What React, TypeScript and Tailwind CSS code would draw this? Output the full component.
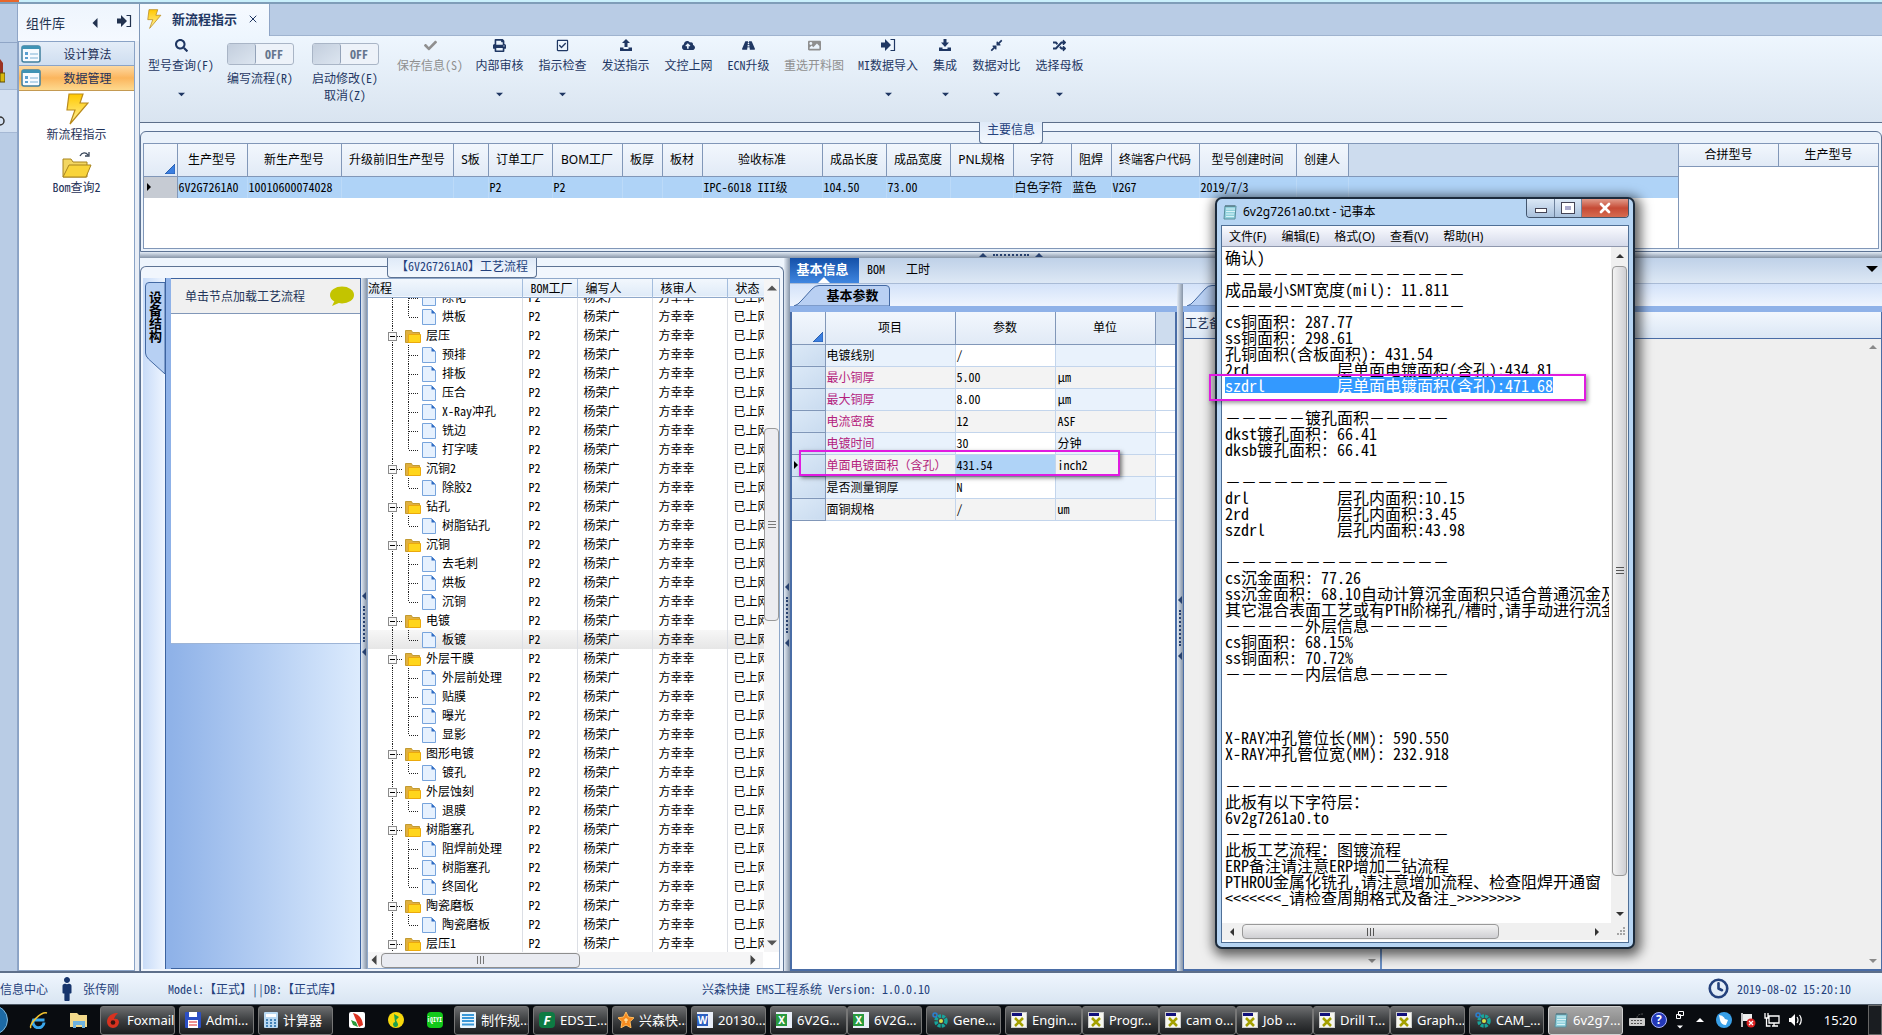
import type { ReactNode } from "react"
import clsx from "clsx"
import {
  FaCheck,
  FaCloudUploadAlt,
  FaCompressAlt,
  FaImage,
  FaPrint,
  FaRandom,
  FaRegCheckSquare,
  FaRoad,
  FaSearch,
  FaMale,
} from "react-icons/fa"
import { FiClock, FiX } from "react-icons/fi"

const YAHEI = "font-['Noto_Sans','Noto_Sans_CJK_SC',sans-serif]"
const SONG = "font-['Noto_Sans_Mono_CJK_SC','Liberation_Serif','Noto_Sans_CJK_SC',serif]"

/* ---------- small drawings ---------- */

function Caret({ dir = "down", className = "" }: { dir?: "up" | "down" | "left" | "right"; className?: string }) {
  const points = { down: "0,2 8,2 4,6", up: "0,6 8,6 4,2", left: "6,0 6,8 2,4", right: "2,0 2,8 6,4" }[dir]
  return (
    <svg viewBox="0 0 8 8" className={clsx("shrink-0 fill-current", className || "h-2 w-2")}>
      <polygon points={points} />
    </svg>
  )
}

function Bolt({ className }: { className: string }) {
  return (
    <svg viewBox="0 0 24 32" className={className}>
      <defs>
        <linearGradient id="bolt" x1="0" y1="0" x2="0" y2="1">
          <stop offset="0" stopColor="#ffc800" />
          <stop offset="1" stopColor="#fff3a0" />
        </linearGradient>
      </defs>
      <path d="M4 1h14l-3 9h8L5 31l5-14H2z" fill="url(#bolt)" stroke="#b98a1c" strokeWidth="1.2" />
    </svg>
  )
}

function FormIcon() {
  return (
    <svg viewBox="0 0 20 18" className="h-[18px] w-5 shrink-0">
      <rect x="1" y="1" width="18" height="16" rx="2" fill="#f7fbff" stroke="#3f7f9d" strokeWidth="1.5" />
      <rect x="1" y="1" width="18" height="3" fill="#3f93b5" />
      <path d="M4 7h3v3H4zM4 12h3v2H4z" fill="#5a9fd0" />
      <path d="M9 8h8v2H9zM9 12h8v2H9z" fill="#b9d6ea" />
    </svg>
  )
}

function OpenFolder() {
  return (
    <svg viewBox="0 0 32 28" className="h-7 w-8">
      <path d="M2 8h8l2 3h14v15H2z" fill="#f3d661" stroke="#a8841f" />
      <path d="M8 14h22l-5 12H2z" fill="#f9d43a" stroke="#a8841f" />
      <path d="M19 5c2-4 6-4 8-1m1-3v4h-4" fill="none" stroke="#38465a" strokeWidth="1.3" />
    </svg>
  )
}

function SignIn() {
  return (
    <svg viewBox="0 0 16 14" className="h-[14px] w-4">
      <path d="M1 4.500h4V1l6 6-6 6V9.500H1z" fill="currentColor" />
      <path d="M10.500 1.500h4v11h-4" fill="none" stroke="currentColor" strokeWidth="1.2" />
    </svg>
  )
}

function Tray({ down = false }: { down?: boolean }) {
  return (
    <svg viewBox="0 0 14 14" className="h-[14px] w-[14px] fill-current">
      <path d={down ? "M5.5 1h3v3.5H11L7 9 3 4.5h2.5z" : "M7 1l4 4H8.5v4h-3V5H3z"} />
      <path d="M1 9.500h3.500v1.500h5V9.500H13V13H1z" />
    </svg>
  )
}

function Bubble() {
  return (
    <svg viewBox="0 0 24 20" className="h-5 w-6">
      <ellipse cx="12" cy="9" rx="12" ry="8.500" fill="#c3c400" />
      <path d="M5 14l-3 6 9-4z" fill="#c3c400" />
    </svg>
  )
}

function HeaderCorner() {
  return (
    <svg viewBox="0 0 10 10" className="ml-auto mr-[2px] mt-[18px] h-[10px] w-[10px]">
      <path d="M10 0v10H0z" fill="#3b7fe0" stroke="#2a5fae" />
    </svg>
  )
}

/* ---------- left side ---------- */

function Sidebar() {
  return (
    <aside className="flex w-[122px] shrink-0 flex-col border-r border-[#7f97b8] bg-[#e9eef6]">
      <div className="flex h-[37px] items-center bg-gradient-to-b from-[#eef5fd] to-[#f5f9ff] pl-2 text-[13px] text-[#22324f]">
        <span className={clsx("w-[64px]", YAHEI)}>组件库</span>
        <button aria-label="收起"><Caret dir="left" className="h-[10px] w-[10px]" /></button>
        <button aria-label="固定" className="ml-4 mb-1"><SignIn /></button>
      </div>
      <div className="mr-1 flex flex-1 flex-col border border-[#8aa3c6] bg-white text-[#1f3258]">
        <button className="flex h-6 items-center border-b border-[#8ba4c8] bg-gradient-to-b from-[#e4edf8] to-[#cfdef0] pl-[2px]">
          <FormIcon />
          <span className="flex-1">设计算法</span>
        </button>
        <button className="flex h-[25px] items-center border-b border-[#c49a52] bg-gradient-to-b from-[#fdd9a0] via-[#fbb55c] to-[#fdd98e] pl-[2px]">
          <FormIcon />
          <span className="flex-1">数据管理</span>
        </button>
        <a href="#flow" className="mt-[2px] flex flex-col items-center gap-px">
          <Bolt className="h-8 w-6" />
          新流程指示
        </a>
        <a href="#bom" className="mt-[9px] flex flex-col items-center">
          <OpenFolder />
          Bom查询2
        </a>
      </div>
    </aside>
  )
}

function EdgeStrip() {
  return (
    <div className="flex w-[18px] shrink-0 flex-col border-r border-[#8fa5c6] bg-[#b9cce5]">
      <div className="h-[39px] border-b border-[#8fa5c6]" />
      <div className="flex h-[47px] items-end border-b border-[#a5b8d4]">
        <svg viewBox="0 0 5 24" className="mb-[6px] h-6 w-[5px]">
          <path d="M0 0l3 4v12H0z" fill="#9a3222" />
          <rect y="14" width="5" height="9" fill="#d9b80e" stroke="#5b4a08" />
        </svg>
      </div>
      <div className="flex h-[43px] items-end border-b border-[#a5b8d4] bg-[#d3e0f1]">
        <svg viewBox="0 0 5 10" className="mb-[6px] h-[10px] w-[5px]">
          <circle cx="0" cy="5" r="4" fill="none" stroke="#333" strokeWidth="1.5" />
        </svg>
      </div>
    </div>
  )
}

/* ---------- toolbar ---------- */

function Tool({ icon, label, width, menu, disabled }: { icon: ReactNode; label: string; width: string; menu?: boolean; disabled?: boolean }) {
  return (
    <button
      disabled={disabled}
      className={clsx("flex h-full shrink-0 flex-col items-center whitespace-nowrap pt-px text-[13px]", width, disabled ? "text-[#8f8f8f]" : "text-[#1f3763]")}
    >
      <span className="flex h-4 items-center">{icon}</span>
      <span className="mt-1 text-xs leading-4">{label}</span>
      {menu && <Caret className="mt-[18px] h-[7px] w-[7px]" />}
    </button>
  )
}

function Toggle({ label, extra, width }: { label: string; extra?: string; width: string }) {
  return (
    <label className={clsx("flex shrink-0 flex-col items-center whitespace-nowrap pt-[7px] leading-[17px] text-[#1f3763]", width)}>
      <input type="checkbox" className="sr-only" />
      <span className="mb-1 flex h-[22px] w-[67px] rounded-[3px] border border-[#a9b5c6] bg-[#edf2f9]">
        <span className="w-7 rounded-[2px] border-r border-[#93a2b8] bg-gradient-to-br from-[#c3cedd] to-[#dce5f0]" />
        <span className="flex-1 text-center font-bold leading-5 text-[#66768e]">OFF</span>
      </span>
      {label}
      {extra && <span>{extra}</span>}
    </label>
  )
}

function Toolbar() {
  return (
    <div className="flex h-[87px] shrink-0 items-start border-b border-[#5d6f8a] bg-gradient-to-b from-[#eef6fe] to-[#d9e4f0]">
      <Tool icon={<FaSearch />} label="型号查询(F)" width="w-[82px]" menu />
      <Toggle label="编写流程(R)" width="w-[76px]" />
      <Toggle label="启动修改(E)" extra="取消(Z)" width="w-[94px]" />
      <Tool icon={<FaCheck />} label="保存信息(S)" width="w-[76px]" disabled />
      <Tool icon={<FaPrint />} label="内部审核" width="w-[63px]" menu />
      <Tool icon={<FaRegCheckSquare />} label="指示检查" width="w-[63px]" menu />
      <Tool icon={<Tray />} label="发送指示" width="w-[63px]" />
      <Tool icon={<FaCloudUploadAlt />} label="文控上网" width="w-[63px]" />
      <Tool icon={<FaRoad />} label="ECN升级" width="w-[57px]" />
      <Tool icon={<FaImage />} label="重选开料图" width="w-[74px]" disabled />
      <Tool icon={<SignIn />} label="MI数据导入" width="w-[74px]" menu />
      <Tool icon={<Tray down />} label="集成" width="w-[40px]" menu />
      <Tool icon={<FaCompressAlt />} label="数据对比" width="w-[63px]" menu />
      <Tool icon={<FaRandom />} label="选择母板" width="w-[63px]" menu />
    </div>
  )
}

/* ---------- main info ---------- */

const mainCols = [
  { name: "", width: "w-[33px]", value: "" },
  { name: "生产型号", width: "w-[70px]", value: "6V2G7261A0" },
  { name: "新生产型号", width: "w-[94px]", value: "10010600074028" },
  { name: "升级前旧生产型号", width: "w-[112px]", value: "" },
  { name: "S板", width: "w-[35px]", value: "" },
  { name: "订单工厂", width: "w-[64px]", value: "P2" },
  { name: "BOM工厂", width: "w-[70px]", value: "P2" },
  { name: "板厚", width: "w-[40px]", value: "" },
  { name: "板材", width: "w-[40px]", value: "" },
  { name: "验收标准", width: "w-[120px]", value: "IPC-6018 III级" },
  { name: "成品长度", width: "w-[64px]", value: "104.50" },
  { name: "成品宽度", width: "w-[64px]", value: "73.00" },
  { name: "PNL规格", width: "w-[63px]", value: "" },
  { name: "字符", width: "w-[58px]", value: "白色字符" },
  { name: "阻焊", width: "w-[40px]", value: "蓝色" },
  { name: "终端客户代码", width: "w-[88px]", value: "V2G7" },
  { name: "型号创建时间", width: "w-[97px]", value: "2019/7/3" },
  { name: "创建人", width: "w-[52px]", value: "" },
]

function MainInfo() {
  return (
    <section className="flex h-[129px] shrink-0 flex-col bg-[#eef5fd] pt-2">
      <div className="relative flex flex-1 rounded-t-md border border-[#5d7394] bg-[#eaf2fb] px-[2px] pb-[2px] pt-[11px]">
        <h2 className="absolute left-1/2 top-[-10px] -ml-8 h-[22px] w-16 rounded-b border border-t-0 border-[#5d7394] bg-gradient-to-b from-[#dfeaf8] to-[#f3f8fe] text-center leading-[14px] text-[#24417c]">
          主要信息
        </h2>
        <div className="min-w-0 flex-1 border border-[#8197b8] bg-white">
          <table className="w-full table-fixed border-collapse">
            <thead>
              <tr className="h-8 bg-gradient-to-b from-[#f2f7fd] to-[#e1eaf6]">
                {mainCols.map((c, i) => (
                  <th key={i} className={clsx("whitespace-nowrap border-b border-r border-[#8197b8] p-0 font-normal", c.width, YAHEI)}>
                    {i === 0 ? <HeaderCorner /> : c.name}
                  </th>
                ))}
                <th className="border-b border-[#8197b8] bg-[#cddcee]" />
              </tr>
            </thead>
            <tbody>
              <tr className="h-[22px] bg-[#afd3f7]">
                {mainCols.map((c, i) => (
                  <td key={i} className={clsx("whitespace-nowrap border-r p-0 pl-px", i === 0 ? "border-[#8197b8] bg-[#c6cbd3]" : "border-[#bcdaf8]")}>
                    {i === 0 ? <Caret dir="right" /> : c.value}
                  </td>
                ))}
                <td />
              </tr>
            </tbody>
          </table>
        </div>
        <div className="w-[200px] shrink-0 border border-l-0 border-[#8197b8] bg-white">
          <table className={clsx("w-full table-fixed border-collapse", YAHEI)}>
            <thead>
              <tr className="h-[22px] bg-gradient-to-b from-[#f2f7fd] to-[#e1eaf6]">
                <th className="border-b border-r border-[#8197b8] p-0 font-normal">合拼型号</th>
                <th className="border-b border-[#8197b8] p-0 font-normal">生产型号</th>
              </tr>
            </thead>
          </table>
        </div>
      </div>
    </section>
  )
}

function SplitterH() {
  return (
    <div className="flex h-[6px] shrink-0 items-center justify-center gap-[6px] bg-gradient-to-b from-[#e3ebf5] to-[#8795a8] text-[#27406e]">
      <Caret dir="up" />
      <span className="w-9 border-t-2 border-dotted border-[#27406e]" />
      <Caret dir="up" />
    </div>
  )
}

function SplitterV() {
  return (
    <div className="flex w-[6px] shrink-0 flex-col items-center justify-center gap-[6px] overflow-hidden bg-gradient-to-r from-[#e3ebf5] to-[#8795a8] text-[#27406e]">
      <Caret dir="left" />
      <span className="h-9 border-l-2 border-dotted border-[#27406e]" />
      <Caret dir="left" />
    </div>
  )
}

/* ---------- process tree ---------- */

type Node = { name: string; leaf?: boolean; last?: boolean; selected?: boolean }

const groups: [string, string[]][] = [
  ["层压", ["预排", "排板", "压合", "X-Ray冲孔", "铣边", "打字唛"]],
  ["沉铜2", ["除胶2"]],
  ["钻孔", ["树脂钻孔"]],
  ["沉铜", ["去毛刺", "烘板", "沉铜"]],
  ["电镀", ["板镀"]],
  ["外层干膜", ["外层前处理", "贴膜", "曝光", "显影"]],
  ["图形电镀", ["镀孔"]],
  ["外层蚀刻", ["退膜"]],
  ["树脂塞孔", ["阻焊前处理", "树脂塞孔", "终固化"]],
  ["陶瓷磨板", ["陶瓷磨板"]],
  ["层压1", []],
]

const nodes: Node[] = [
  { name: "除化", leaf: true },
  { name: "烘板", leaf: true, last: true },
  ...groups.flatMap(([name, kids]): Node[] => [
    { name },
    ...kids.map((k, i) => ({ name: k, leaf: true, last: i === kids.length - 1, selected: k === "板镀" })),
  ]),
]

function TreeIcon({ leaf, last }: Node) {
  return (
    <svg viewBox="0 0 70 19" className={clsx("h-[19px] shrink-0", leaf ? "w-[70px]" : "w-[54px]")} preserveAspectRatio="xMinYMid slice">
      <path d="M24.500 0v19" stroke="#222" strokeDasharray="1 1" />
      {leaf ? (
        <>
          <path d={last ? "M40.500 0v10" : "M40.500 0v19"} stroke="#222" strokeDasharray="1 1" />
          <path d="M41 10.500h9" stroke="#222" strokeDasharray="1 1" />
          <path d="M54.500 2.500h9l4 4v11h-13z" fill="#e6f1fe" stroke="#77a4dc" />
          <path d="M63.500 2.500v4h4z" fill="#2f6cc4" />
        </>
      ) : (
        <>
          <path d="M29 10.500h6" stroke="#222" strokeDasharray="1 1" />
          <rect x="20.500" y="6.500" width="8" height="8" fill="#fafafa" stroke="#8b8b8b" />
          <path d="M22 10.500h5" stroke="#000" />
          <path d="M37.500 4.500h6l1 2h7v10h-14z" fill="#e0b040" stroke="#c29a30" />
          <path d="M40.500 8.500h12v8h-12z" fill="#ffd51c" stroke="#eba90c" />
        </>
      )}
    </svg>
  )
}

function TreeCols() {
  return (
    <colgroup>
      <col className="w-[154px]" />
      <col className="w-[55px]" />
      <col className="w-[75px]" />
      <col className="w-[75px]" />
      <col />
    </colgroup>
  )
}

function ProcessTree() {
  const th = "border-r border-[#a4bddd] p-0 pl-2 font-normal"
  const td = "border-r border-[#dcdfe5] p-0 pl-[6px]"
  return (
    <div className="flex w-[413px] shrink-0 flex-col border border-[#8fa8ca] bg-white">
      <div className="flex min-h-0 flex-1">
        <div className="flex min-w-0 flex-1 flex-col overflow-hidden">
          <table className="w-full shrink-0 table-fixed border-collapse whitespace-nowrap text-left">
            <TreeCols />
            <thead>
              <tr className="h-[18px] border-b border-[#8fa8ca] bg-gradient-to-b from-[#f2f7fd] to-[#dfebf8]">
                <th className="border-r border-[#a4bddd] p-0 font-normal">流程</th>
                <th className={th}>BOM工厂</th>
                <th className={th}>编写人</th>
                <th className={th}>核审人</th>
                <th className="p-0 pl-2 font-normal">状态</th>
              </tr>
            </thead>
          </table>
          <div className="min-h-0 flex-1 overflow-hidden">
            <table className="-mt-[10px] w-full table-fixed border-collapse whitespace-nowrap">
              <TreeCols />
              <tbody>
                {nodes.map((n, i) => (
                  <tr key={i} className={clsx("h-[19px]", n.selected && "bg-gradient-to-b from-[#f7f7f7] to-[#e6e6e6]")}>
                    <td className="border-r border-[#dcdfe5] p-0">
                      <span className="flex h-[19px] items-center gap-1 leading-[18px]">
                        <TreeIcon {...n} />
                        {n.name}
                      </span>
                    </td>
                    <td className={td}>P2</td>
                    <td className={td}>杨荣广</td>
                    <td className={td}>方幸幸</td>
                    <td className="overflow-hidden p-0 pl-[6px]">已上网</td>
                  </tr>
                ))}
              </tbody>
            </table>
          </div>
        </div>
        <div className="flex w-[15px] shrink-0 flex-col items-center bg-[#f5f5f6] py-1 text-[#555]">
          <Caret dir="up" className="h-[10px] w-[10px]" />
          <div className="flex-[135]" />
          <div className="flex w-full flex-[191] flex-col items-center justify-center gap-[2px] rounded-sm border border-[#9a9a9a] bg-[#ececf0]">
            <i className="h-px w-2 bg-[#777]" />
            <i className="h-px w-2 bg-[#777]" />
            <i className="h-px w-2 bg-[#777]" />
          </div>
          <div className="flex-[318]" />
          <Caret className="h-[10px] w-[10px]" />
        </div>
      </div>
      <div className="mr-4 flex h-4 shrink-0 items-center bg-[#f5f5f6] px-[1px] text-[#444]">
        <Caret dir="left" className="h-[10px] w-[10px]" />
        <div className="ml-[2px] flex h-[15px] w-[199px] items-center justify-center gap-[2px] rounded-sm border border-[#8e8e8e] bg-[#e9ebf1]">
          <i className="h-2 w-px bg-[#777]" />
          <i className="h-2 w-px bg-[#777]" />
          <i className="h-2 w-px bg-[#777]" />
        </div>
        <Caret dir="right" className="ml-auto mr-1 h-[10px] w-[10px]" />
      </div>
    </div>
  )
}

function DeviceTab() {
  return (
    <div className="flex w-[218px] shrink-0">
      <div className="w-[22px] bg-gradient-to-r from-[#c9dcf8] to-[#eef5ff] pl-[2px] pt-1">
        <button className="relative flex h-[92px] w-5 items-start justify-center pt-[9px] text-[13px] font-bold text-black">
          <svg viewBox="0 0 20 92" className="absolute inset-0 h-full w-full">
            <path d="M20 .5H4Q.5 .5 .5 4v67q0 3 3 6l16.500 15z" fill="#b7d0f3" stroke="#4369a3" />
          </svg>
          <span className="relative leading-5 [writing-mode:vertical-rl]">设备结构</span>
        </button>
      </div>
      <div className="w-[6px] border-l border-[#3c63a0] bg-[#8fb2e8]" />
      <div className="flex flex-1 flex-col border border-l-0 border-[#3c63a0] bg-gradient-to-r from-[#8fb2e8] to-[#dcebfd]">
        <div className="flex h-[35px] items-center justify-between border-b border-[#8197b8] bg-[#f0f0f0] pl-[14px] pr-[6px] text-[#24355a]">
          单击节点加载工艺流程
          <Bubble />
        </div>
        <div className="h-[330px] border-b border-[#9db4d6] bg-white" />
      </div>
    </div>
  )
}

function ProcessPanel() {
  return (
    <section className="flex w-[644px] shrink-0 flex-col bg-[#eef5fd] pt-2">
      <div className="relative flex min-h-0 flex-1 rounded-t-md border border-b-0 border-[#5d7394] bg-[#f1f6fd] px-[2px] pb-[2px] pt-[11px]">
        <h2 className="absolute left-[246px] top-[-9px] h-5 w-[150px] whitespace-nowrap rounded-b border border-t-0 border-[#5d7394] bg-gradient-to-b from-[#dfeaf8] to-[#f3f8fe] text-center leading-4 text-[#24417c]">
          【6V2G7261A0】工艺流程
        </h2>
        <DeviceTab />
        <SplitterV />
        <ProcessTree />
      </div>
    </section>
  )
}

/* ---------- parameters ---------- */

const params = [
  { name: "电镀线别", value: "/", unit: "" },
  { name: "最小铜厚", value: "5.00", unit: "μm", key: true },
  { name: "最大铜厚", value: "8.00", unit: "μm", key: true },
  { name: "电流密度", value: "12", unit: "ASF", key: true },
  { name: "电镀时间", value: "30", unit: "分钟", key: true },
  { name: "单面电镀面积（含孔）", value: "431.54", unit: "inch2", key: true, current: true },
  { name: "是否测量铜厚", value: "N", unit: "" },
  { name: "面铜规格", value: "/", unit: "um" },
]

function SlantTab({ label }: { label?: string }) {
  return (
    <div className="h-[28px] shrink-0 border-b-[6px] border-[#8fb2e8] bg-gradient-to-b from-[#d3e2f9] to-[#eff5fe]">
      <button className="relative ml-1 h-[22px] w-[97px] pl-5 text-[13px] font-bold leading-[20px]">
        <svg viewBox="0 0 97 22" className="absolute inset-0 h-full w-full">
          <path d="M0 22Q4 21 8 16L18 5Q21 1.500 25 1.500H92Q95.500 1.500 95.500 5V22z" fill="#b9d0f3" stroke="#4369a3" />
        </svg>
        <span className="relative">{label}</span>
      </button>
    </div>
  )
}

function ParamPanel() {
  const th = "border-b border-r border-[#8197b8] p-0 font-normal"
  return (
    <div className="flex w-[387px] shrink-0 flex-col">
      <SlantTab label="基本参数" />
      <div className="relative flex-1 border-x-2 border-b-2 border-[#4a6da6] bg-white">
        <table className="w-full table-fixed border-collapse">
          <thead>
            <tr className="h-8 bg-gradient-to-b from-[#f2f7fd] to-[#e1eaf6]">
              <th className={clsx(th, "w-[33px]")}><HeaderCorner /></th>
              <th className={clsx(th, "w-[130px]", YAHEI)}>项目</th>
              <th className={clsx(th, "w-[100px]", YAHEI)}>参数</th>
              <th className={clsx(th, "w-[100px]", YAHEI)}>单位</th>
              <th className="border-b border-[#8197b8] bg-[#cddcee]" />
            </tr>
          </thead>
          <tbody>
            {params.map((p, i) => (
              <tr key={p.name} className={clsx("h-[22px] whitespace-nowrap", i % 2 ? "bg-[#f3f3f3]" : "bg-[#e9f2fc]")}>
                <td className="border-b border-r border-[#8197b8] bg-gradient-to-br from-[#dce9f7] to-[#c9dbef] p-0">
                  {p.current && <Caret dir="right" />}
                </td>
                <td className={clsx("border-b border-r border-[#c3d5ec] p-0 pl-px", p.key && "text-[#b3217c]")}>{p.name}</td>
                <td className={clsx("border-b border-r border-[#c3d5ec] p-0 pl-px", p.current ? "bg-[#afd3f7]" : i % 2 === 0 && "bg-white")}>{p.value}</td>
                <td className="border-b border-r border-[#c3d5ec] p-0 pl-[2px]">{p.unit}</td>
                <td className="border-b border-[#c3d5ec] bg-white" />
              </tr>
            ))}
          </tbody>
        </table>
        <div className="absolute left-[7px] top-[138px] h-[26px] w-[321px] border-2 border-[#e01be0] shadow-[2px_2px_4px_rgba(0,0,0,0.5)]" />
      </div>
    </div>
  )
}

function RemarkPanel() {
  return (
    <div className="flex min-w-0 flex-1 flex-col">
      <SlantTab />
      <div className="flex h-[27px] shrink-0 items-center border-x border-b border-[#4a6da6] bg-gradient-to-b from-[#f2f7fd] to-[#dbe7f5] pb-1 pl-px text-[#24355a]">
        工艺备注
      </div>
      <div className="flex flex-1 border-x border-b-2 border-[#4a6da6] bg-[#efefef] text-[#8a8a8a]">
        <div className="flex w-[198px] items-end justify-end border-r-2 border-[#6a8fc4] pb-1 pr-1"><Caret /></div>
        <div className="flex flex-1 flex-col items-end justify-between py-1 pr-1">
          <Caret dir="up" />
          <Caret />
        </div>
      </div>
    </div>
  )
}

function DetailPanel() {
  return (
    <section className="flex min-w-0 flex-1 flex-col">
      <nav className="flex h-[26px] shrink-0 items-stretch border-b border-[#a9bbd6] bg-gradient-to-b from-[#bfd1e8] to-[#dde8f5]">
        <button className="relative w-[69px] bg-gradient-to-b from-[#1450a8] to-[#3f86e0] pb-1 pr-1 text-[13px] font-bold text-white">
          基本信息
          <Caret dir="up" className="absolute bottom-[-3px] left-[28px] h-3 w-3" />
        </button>
        <button className="w-[34px] pb-1">BOM</button>
        <button className="w-[50px] pb-1">工时</button>
        <button className="ml-auto mr-1 pb-1" aria-label="更多"><Caret className="h-3 w-3" /></button>
      </nav>
      <div className="flex min-h-0 flex-1">
        <ParamPanel />
        <SplitterV />
        <RemarkPanel />
      </div>
    </section>
  )
}

/* ---------- notepad window ---------- */

const DASH14 = "－".repeat(14)
const DASH15 = "－".repeat(15)
const DASH5 = "－".repeat(5)

const noteLines = [
  "确认)",
  DASH15,
  "成品最小SMT宽度(mil): 11.811",
  DASH15,
  "cs铜面积: 287.77",
  "ss铜面积: 298.61",
  "孔铜面积(含板面积): 431.54",
  "2rd\t层单面电镀面积(含孔):434.81",
  "szdrl\t层单面电镀面积(含孔):471.68",
  "",
  `${DASH5}镀孔面积${DASH5}`,
  "dkst镀孔面积: 66.41",
  "dksb镀孔面积: 66.41",
  "",
  DASH14,
  "drl\t层孔内面积:10.15",
  "2rd\t层孔内面积:3.45",
  "szdrl\t层孔内面积:43.98",
  "",
  DASH14,
  "cs沉金面积: 77.26",
  "ss沉金面积: 68.10自动计算沉金面积只适合普通沉金及",
  "其它混合表面工艺或有PTH阶梯孔/槽时,请手动进行沉金",
  `${DASH5}外层信息${DASH5}`,
  "cs铜面积: 68.15%",
  "ss铜面积: 70.72%",
  `${DASH5}内层信息${DASH5}`,
  "",
  "",
  "",
  "X-RAY冲孔管位长(MM): 590.550",
  "X-RAY冲孔管位宽(MM): 232.918",
  "",
  DASH14,
  "此板有以下字符层：",
  "6v2g7261a0.to",
  DASH14,
  "此板工艺流程：图镀流程",
  "ERP备注请注意ERP增加二钻流程",
  "PTHROU金属化铣孔,请注意增加流程、检查阻焊开通窗",
  "<<<<<<<_请检查周期格式及备注_>>>>>>>>",
]

function NoteIcon({ className = "h-4 w-[14px]" }: { className?: string }) {
  return (
    <svg viewBox="0 0 14 16" className={className}>
      <path d="M2 2h11l-1 13H1z" fill="#8fd0dc" stroke="#5a8f9c" />
      <path d="M3 5h9M3 7.500h9M3 10h8M3 12.500h8" stroke="#d8f3f7" />
      <path d="M3 1v2M5 1v2M7 1v2M9 1v2M11 1v2" stroke="#4d6670" />
    </svg>
  )
}

function Notepad() {
  return (
    <div className="absolute left-[1215px] top-[197px] flex h-[752px] w-[420px] flex-col rounded-[7px] border-2 border-[#1c2b3c] bg-[#b7d5f3] px-1 pb-1 shadow-[2px_3px_12px_4px_rgba(0,0,0,0.6)]">
      <div className={clsx("flex h-[26px] shrink-0 items-center gap-[6px] pl-[2px] text-xs", YAHEI)}>
        <NoteIcon />
        6v2g7261a0.txt - 记事本
        <div className="ml-auto flex h-[19px] self-start overflow-hidden rounded-b border border-t-0 border-[#43566e]">
          <button aria-label="最小化" className="flex w-7 items-center justify-center border-r border-[#6d819b] bg-gradient-to-b from-[#dbe8f6] to-[#a9c1dc]">
            <span className="mt-1 h-[5px] w-3 border border-[#445] bg-white" />
          </button>
          <button aria-label="最大化" className="flex w-[27px] items-center justify-center border-r border-[#6d819b] bg-gradient-to-b from-[#dbe8f6] to-[#a9c1dc]">
            <span className="h-[10px] w-3 border-[3px] border-white bg-[#aac] outline outline-1 outline-[#445]" />
          </button>
          <button aria-label="关闭" className="flex w-[46px] items-center justify-center bg-gradient-to-b from-[#e09a8a] via-[#c64a35] to-[#d66b50] text-white">
            <FiX className="h-4 w-4" strokeWidth={4} />
          </button>
        </div>
      </div>
      <div className="flex min-h-0 flex-1 flex-col border border-[#4f6f96] bg-white">
        <div className={clsx("flex h-[21px] shrink-0 items-center gap-[15px] border-b border-[#8f97ad] bg-gradient-to-b from-[#fafbff] to-[#d5daea] pl-[7px] pt-px text-xs", YAHEI)}>
          <button>文件(F)</button>
          <button>编辑(E)</button>
          <button>格式(O)</button>
          <button>查看(V)</button>
          <button>帮助(H)</button>
        </div>
        <div className="flex min-h-0 flex-1">
          <pre className={clsx("mr-[2px] min-w-0 flex-1 overflow-hidden pl-[3px] pt-[2px] text-base leading-4 [tab-size:112px]", SONG)}>
            {noteLines.map((line, i) => (
              <div key={i} className="h-4">
                <span className={clsx("inline-block h-4", i === 8 && "bg-[#3399ff] text-white")}>{line}</span>
              </div>
            ))}
          </pre>
          <div className="flex w-[17px] shrink-0 flex-col items-center bg-[#f0f0f0] py-[5px] text-[#333]">
            <Caret dir="up" />
            <div className="mt-[6px] flex w-[15px] flex-[606] flex-col items-center justify-center gap-[2px] rounded-sm border border-[#999] bg-gradient-to-r from-[#f3f3f3] to-[#cfcfd3]">
              <i className="h-px w-2 bg-[#555]" />
              <i className="h-px w-2 bg-[#555]" />
              <i className="h-px w-2 bg-[#555]" />
            </div>
            <div className="flex-[34]" />
            <Caret />
          </div>
        </div>
        <div className="flex h-[17px] shrink-0 items-center bg-[#f0f0f0] pl-[6px] pr-[2px] text-[#333]">
          <Caret dir="left" />
          <div className="ml-[6px] flex h-[15px] w-[257px] items-center justify-center gap-[2px] rounded-sm border border-[#999] bg-gradient-to-b from-[#f3f3f3] to-[#cfcfd3]">
            <i className="h-2 w-px bg-[#555]" />
            <i className="h-2 w-px bg-[#555]" />
            <i className="h-2 w-px bg-[#555]" />
          </div>
          <Caret dir="right" className="ml-auto mr-4 h-2 w-2" />
          <svg viewBox="0 0 9 9" className="h-[9px] w-[9px] fill-[#a5a5a5]">
            <path d="M6 0h2v2H6zM3 3h2v2H3zM6 3h2v2H6zM0 6h2v2H0zM3 6h2v2H3zM6 6h2v2H6z" />
          </svg>
        </div>
        <div className="h-[2px] shrink-0" />
      </div>
      <div className="absolute left-[-8px] top-[175px] h-[27px] w-[377px] border-2 border-[#e01be0] shadow-[2px_2px_4px_rgba(0,0,0,0.4)]" />
    </div>
  )
}

/* ---------- status bar and taskbar ---------- */

function StatusBar() {
  return (
    <footer className="flex h-[33px] shrink-0 items-center border-t-2 border-[#5d6f8a] bg-gradient-to-b from-[#eff6fe] to-[#d9e5f2] text-[#24417c]">
      <span className="w-[56px]">信息中心</span>
      <FaMale className="h-6 w-[22px] text-[#16346c]" />
      <span className="w-[90px] pl-[5px]">张传刚</span>
      <span className="w-[534px]">Model:【正式】||DB:【正式库】</span>
      <span>兴森快捷 EMS工程系统 Version: 1.0.0.10</span>
      <FiClock className="ml-auto mr-2 h-[21px] w-[21px]" strokeWidth={3} />
      <span className="mr-[31px]">2019-08-02 15:20:10</span>
    </footer>
  )
}

function GlyphBox({ bg, fg = "text-white", text }: { bg: string; fg?: string; text: string }) {
  return <span className={clsx("flex h-4 w-4 items-center justify-center overflow-hidden rounded-sm text-[13px] font-bold italic leading-none", bg, fg)}>{text}</span>
}

function ExceedIcon() {
  return (
    <svg viewBox="0 0 16 16" className="h-4 w-4">
      <rect x=".5" y=".5" width="15" height="15" fill="#f6f6ee" stroke="#ccc" />
      <rect x="1" y="1" width="10" height="3" fill="#10107c" />
      <path d="M4 6l8 8M12 6l-8 8" stroke="#a4a000" strokeWidth="2.500" />
    </svg>
  )
}

function GearIcon() {
  return (
    <svg viewBox="0 0 16 16" className="h-4 w-4">
      <circle cx="9" cy="9" r="5" fill="none" stroke="#17a59b" strokeWidth="3.500" strokeDasharray="3 1" />
      <circle cx="9" cy="9" r="2" fill="#d3e04a" />
      <circle cx="3" cy="3" r="2" fill="none" stroke="#2a7fd0" strokeWidth="1.500" />
    </svg>
  )
}

function DocIcon({ color, text }: { color: string; text: string }) {
  return (
    <span className="flex h-4 w-4 items-center justify-end bg-[#e9eef8]">
      <span className={clsx("mr-auto flex h-3 w-[11px] items-center justify-center text-[10px] font-bold leading-none text-white", color)}>{text}</span>
    </span>
  )
}

function LinesIcon() {
  return (
    <svg viewBox="0 0 16 16" className="h-4 w-4">
      <rect width="16" height="16" rx="1" fill="#e9f5fd" />
      <path d="M2 3h12M2 6h12M2 9h12M2 12.500h12" stroke="#3a98d8" strokeWidth="1.800" />
    </svg>
  )
}

function Floppy() {
  return (
    <svg viewBox="0 0 16 16" className="h-4 w-4">
      <rect width="16" height="16" rx="1" fill="#2c4fc4" />
      <path d="M4 0h8v5H4zM3 8h10v8H3z" fill="#fff" />
      <path d="M4 10h8M4 13h8" stroke="#d22" />
    </svg>
  )
}

function FoxIcon() {
  return (
    <svg viewBox="0 0 16 16" className="h-4 w-4">
      <path d="M12 1C5 1 1 5 1 10a6 6 0 0012 0c0-3-3-4-5-3 1-3 2-4 4-6z" fill="#d8321f" />
      <circle cx="7" cy="10.500" r="2.300" fill="#3a1510" />
    </svg>
  )
}

function CalcIcon() {
  return (
    <svg viewBox="0 0 14 16" className="h-4 w-[14px]">
      <rect width="14" height="16" rx="1" fill="#b9d9f2" />
      <rect x="2" y="2" width="10" height="3" fill="#fff" />
      <path d="M3 7v8M7 7v8M11 7v8" stroke="#4483b8" strokeWidth="2" strokeDasharray="2 1" />
    </svg>
  )
}

function StarIcon() {
  return (
    <svg viewBox="0 0 16 16" className="h-4 w-4">
      <path d="M8 0l2.500 5 5.500.8-4 4 1 6L8 13l-5 2.800 1-6-4-4L5.500 5z" fill="#f58a1f" stroke="#ffbd60" />
      <path d="M6 8h4M8 6v5" stroke="#fff3c0" />
    </svg>
  )
}

function Task({ icon, label, joined, active }: { icon: ReactNode; label: string; joined?: boolean; active?: boolean }) {
  return (
    <button
      className={clsx(
        "flex h-[29px] shrink-0 items-center gap-[5px] overflow-hidden whitespace-nowrap rounded-[3px] border pl-[5px] text-[13px] text-white",
        YAHEI,
        joined ? "mr-0 w-[77px]" : "mr-[4px] w-[75px]",
        active ? "border-[#d0d0d0] bg-gradient-to-b from-[#a8a8a8] to-[#787878]" : "border-[#777] bg-gradient-to-b from-[#6c6d6f] via-[#3c3e40] to-[#1b1d1f]",
      )}
    >
      <span className="shrink-0">{icon}</span>
      {label}
    </button>
  )
}

function Taskbar() {
  const pin = "flex w-[39px] shrink-0 items-center justify-center"
  return (
    <footer className="flex h-[31px] shrink-0 items-center overflow-hidden border-t border-[#4b5662] bg-[#090c10] text-white">
      <svg viewBox="0 0 8 30" className="h-[30px] w-2 shrink-0">
        <circle cx="-7" cy="15" r="14.500" fill="#1d6aa5" stroke="#7fb9de" />
      </svg>
      <button aria-label="IE" className="flex w-[62px] justify-center">
        <svg viewBox="0 0 20 18" className="h-[18px] w-5">
          <path d="M15 11.500A5.500 5.500 0 114.500 9h11" fill="none" stroke="#3aa7ec" strokeWidth="3" />
          <path d="M2 17C-1 14 12 0 18 2" fill="none" stroke="#f4c430" strokeWidth="1.500" />
        </svg>
      </button>
      <button aria-label="资源管理器" className="mr-3">
        <svg viewBox="0 0 18 16" className="h-4 w-[18px]">
          <path d="M0 1h7l2 2h8v12H0z" fill="#f2d98a" />
          <path d="M3 9h12v7h-3v-3H6v3H3z" fill="#6fb3e0" />
        </svg>
      </button>
      <Task icon={<FoxIcon />} label="Foxmail" />
      <Task icon={<Floppy />} label="Admi..." />
      <Task icon={<CalcIcon />} label="计算器" />
      <span className={pin}>
        <svg viewBox="0 0 16 16" className="h-4 w-4">
          <rect width="16" height="16" rx="2" fill="#fff" />
          <path d="M4 1q9 2 10 12l-4 2z" fill="#d32" />
          <path d="M2 8l5 2 2 5-5-2z" fill="#2a9a3a" />
        </svg>
      </span>
      <span className={pin}>
        <svg viewBox="0 0 16 16" className="h-4 w-4">
          <circle cx="8" cy="8" r="8" fill="#f7d80c" />
          <path d="M6 2l5 3-3 3 2 4a2.500 2.500 0 11-3-2L6 2z" fill="#1fa04b" />
        </svg>
      </span>
      <span className={pin}>
        <span className="flex h-4 w-4 items-center justify-center rounded-sm bg-[#12c81a] text-[6px] font-bold">iQIYI</span>
      </span>
      <Task icon={<LinesIcon />} label="制作规..." />
      <Task icon={<GlyphBox bg="bg-[#0d7b43]" text="F" />} label="EDS工..." />
      <Task icon={<StarIcon />} label="兴森快..." />
      <Task icon={<DocIcon color="bg-[#2d5fc0]" text="W" />} label="20130..." />
      <Task icon={<DocIcon color="bg-[#2a9a3f]" text="X" />} label="6V2G..." joined />
      <Task icon={<DocIcon color="bg-[#2a9a3f]" text="X" />} label="6V2G..." />
      <Task icon={<GearIcon />} label="Gene..." />
      <Task icon={<ExceedIcon />} label="Engin..." joined />
      <Task icon={<ExceedIcon />} label="Progr..." joined />
      <Task icon={<ExceedIcon />} label="cam o..." joined />
      <Task icon={<ExceedIcon />} label="Job ..." joined />
      <Task icon={<ExceedIcon />} label="Drill T..." joined />
      <Task icon={<ExceedIcon />} label="Graph..." />
      <Task icon={<GearIcon />} label="CAM_..." />
      <Task icon={<NoteIcon />} label="6v2g7..." active />
      <div className={clsx("ml-auto flex items-center text-[13px]", YAHEI)}>
        <svg viewBox="0 0 16 14" className="h-[14px] w-4">
          <rect y="5" width="16" height="8" rx="1" fill="#ccc" />
          <path d="M2 7.500h12M2 10.500h12M8 5q0-4 6-4" fill="none" stroke="#555" strokeDasharray="2 1" />
        </svg>
        <span className="ml-[6px] flex h-4 w-4 items-center justify-center rounded-full border border-[#aab6ff] bg-[#2338b8] text-[12px] font-bold">?</span>
        <span className="ml-[9px] flex flex-col items-center gap-[5px]">
          <svg viewBox="0 0 8 8" className="h-2 w-2">
            <path d="M2.500 .5h5v4h-5zM.5 3.500h4v4h-4z" fill="#090c10" stroke="#fff" />
          </svg>
          <Caret className="h-[6px] w-[6px]" />
        </span>
        <Caret dir="up" className="ml-[12px] h-2 w-2" />
        <svg viewBox="0 0 16 16" className="ml-[12px] h-4 w-4">
          <circle cx="8" cy="8" r="8" fill="#39a0e8" />
          <path d="M3 3q4 0 6 4l3 1-2 5q-5 0-6-5z" fill="#fff" />
        </svg>
        <svg viewBox="0 0 16 16" className="ml-2 h-4 w-4">
          <path d="M2 1v14" stroke="#fff" strokeWidth="1.500" />
          <path d="M3 2h9v7H3z" fill="#eee" />
          <circle cx="11" cy="11" r="4.500" fill="#d22" />
          <path d="M9 9l4 4M13 9l-4 4" stroke="#fff" strokeWidth="1.300" />
        </svg>
        <svg viewBox="0 0 16 16" className="ml-2 h-4 w-4" fill="none" stroke="#fff" strokeWidth="1.300">
          <path d="M5 4h10v7H5zM8 14h6M10 11v3M1 1v5h3V1M2.500 6v8h4" />
        </svg>
        <svg viewBox="0 0 16 16" className="ml-2 h-4 w-4">
          <path d="M1 6h2l4-4v12l-4-4H1z" fill="#fff" />
          <path d="M9 5q2 3 0 6M11.500 3q3.500 5 0 10" fill="none" stroke="#fff" strokeWidth="1.200" />
        </svg>
        <span className="ml-[20px]">15:20</span>
        <span className="ml-[11px] h-[30px] w-[14px] border border-[#666] bg-[#1a1d21]" />
      </div>
    </footer>
  )
}

export default function App() {
  return (
    <div className={clsx("relative flex h-screen flex-col overflow-hidden bg-[#b9cce5] text-xs leading-4 text-black", SONG)}>
      <div className="flex h-1 shrink-0 border-b-2 border-[#7f9db8] bg-[#c9effb]">
        <div className="w-[19px] bg-[#e8662a]" />
      </div>
      <div className="flex min-h-0 flex-1">
        <EdgeStrip />
        <Sidebar />
        <main className="flex min-w-0 flex-1 flex-col">
          <div className="flex h-8 shrink-0 border-b border-[#9fb3cf]">
            <div className="-mb-px flex w-[130px] items-center gap-[10px] border-r border-[#8fa5c6] bg-gradient-to-b from-[#f6faff] to-[#eef6fe] pb-[3px] pl-[6px] text-[#1f3763]">
              <Bolt className="h-5 w-4" />
              <span className="text-[13px] font-bold">新流程指示</span>
              <button aria-label="关闭标签"><FiX className="h-3 w-3" /></button>
            </div>
          </div>
          <Toolbar />
          <MainInfo />
          <SplitterH />
          <div className="flex min-h-0 flex-1">
            <ProcessPanel />
            <SplitterV />
            <DetailPanel />
          </div>
        </main>
      </div>
      <StatusBar />
      <Taskbar />
      <Notepad />
    </div>
  )
}
